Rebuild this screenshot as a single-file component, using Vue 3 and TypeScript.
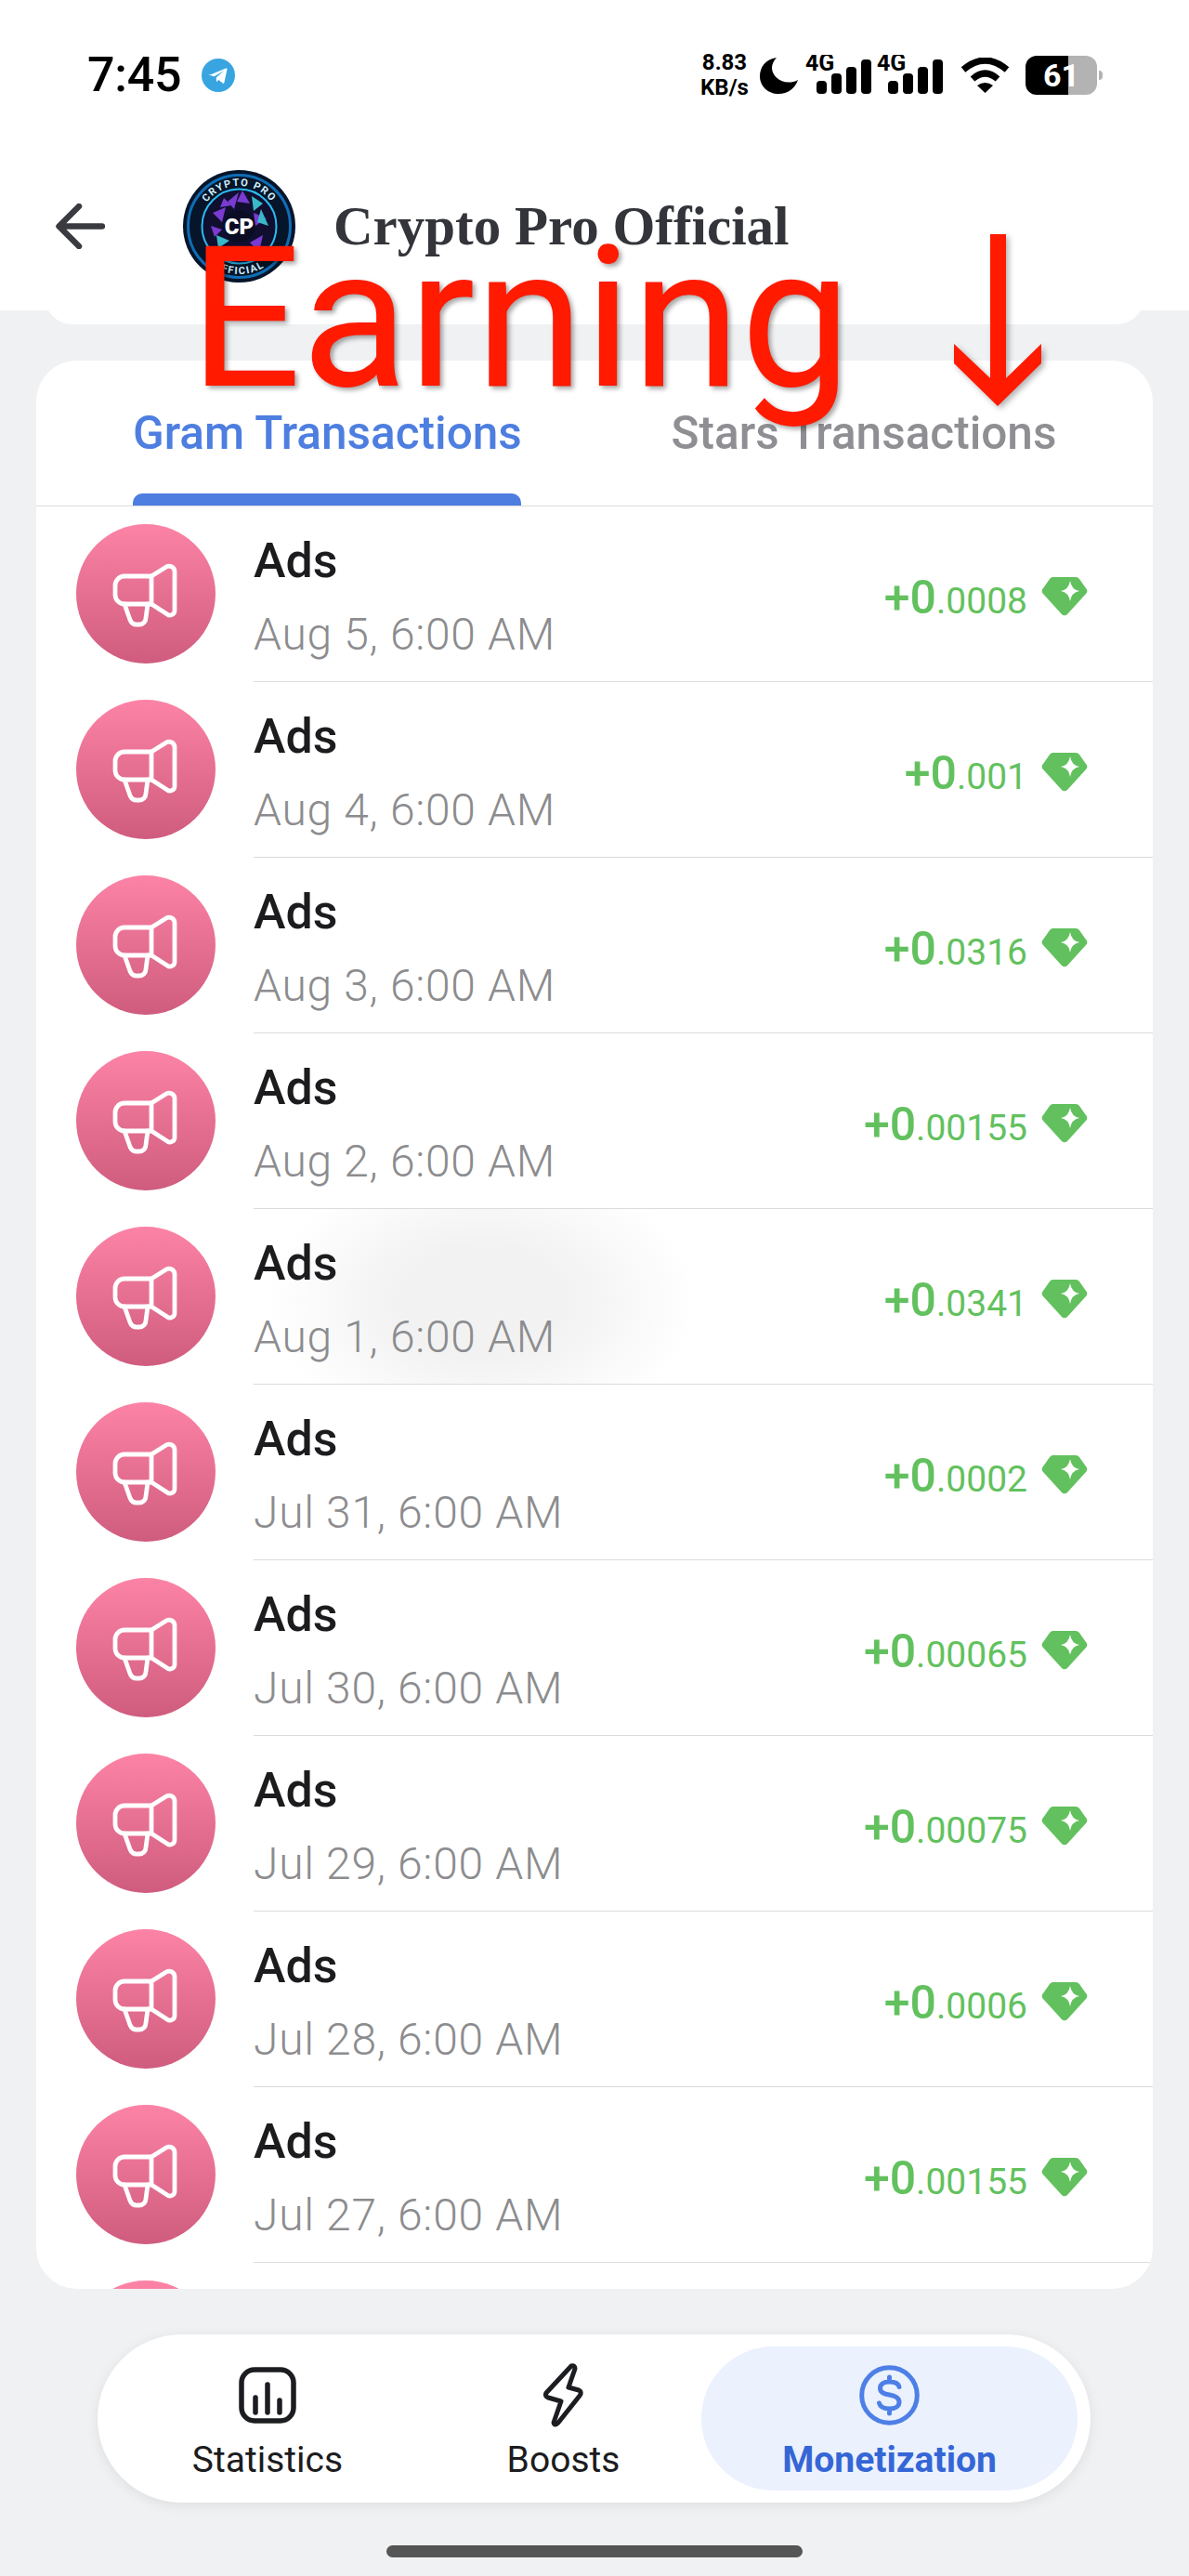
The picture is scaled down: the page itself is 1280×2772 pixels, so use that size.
<script setup lang="ts">
interface Tx {
  date: string;
  frac: string;
}

const txs: Tx[] = [
  { date: 'Aug 5, 6:00 AM', frac: '.0008' },
  { date: 'Aug 4, 6:00 AM', frac: '.001' },
  { date: 'Aug 3, 6:00 AM', frac: '.0316' },
  { date: 'Aug 2, 6:00 AM', frac: '.00155' },
  { date: 'Aug 1, 6:00 AM', frac: '.0341' },
  { date: 'Jul 31, 6:00 AM', frac: '.0002' },
  { date: 'Jul 30, 6:00 AM', frac: '.00065' },
  { date: 'Jul 29, 6:00 AM', frac: '.00075' },
  { date: 'Jul 28, 6:00 AM', frac: '.0006' },
  { date: 'Jul 27, 6:00 AM', frac: '.00155' },
  { date: 'Jul 26, 6:00 AM', frac: '.0004' },
];

// purple and teal bits inside the channel logo
const shards = [
  '60,24 48,34 55,42',
  '74,28 86,36 76,44',
  '32,46 46,40 42,56',
  '90,52 76,46 78,60',
  '36,70 50,76 38,84',
  '86,70 72,78 82,88',
  '50,90 62,82 66,94',
  '74,92 66,98 60,90',
  '64,22 72,36 58,34',
  '44,30 52,38 40,40',
  '84,42 92,60 80,56',
  '30,60 42,64 34,72',
];
</script>

<template>
  <div class="phone">
    <div class="top">
      <div class="status">
        <div class="status-left">
          <span class="time">7:45</span>
          <svg class="tg" viewBox="0 0 24 24">
            <circle cx="12" cy="12" r="12" fill="#38a5e1" />
            <path d="M5 12.2 17.4 7c.6-.2 1.1.1.9.9l-2 9.2c-.2.7-.6.8-1.1.5l-3-2.2-1.5 1.4-.2-3.1 5.6-5-7 4.2-3-.9c-.7-.2-.7-.6-.1-.8Z" fill="#fff" />
          </svg>
        </div>
        <div class="status-right">
          <div class="net">8.83<br />KB/s</div>
          <svg class="moon" viewBox="0 0 41 40">
            <path d="M18 1C6 3 0 11 0 21c0 11 9 19 20 19 10 0 18-6 21-15-3 2-7 2.500-10 2.500-10 0-18-7.500-18-15.500 0-4 2-8 5-11Z" />
          </svg>
          <svg v-for="n in 2" :key="n" class="signal" viewBox="0 0 71 44">
            <text x="0" y="17" class="sig-text">4G</text>
            <rect x="12" y="28" width="11" height="14" rx="4" />
            <rect x="28" y="20" width="11" height="22" rx="4" />
            <rect x="44" y="13" width="11" height="29" rx="4" />
            <rect x="60" y="5" width="11" height="37" rx="4" />
          </svg>
          <svg class="wifi" viewBox="0 0 53 38">
            <path d="M3 13Q26.500-7 50 13" fill="none" stroke="#000" stroke-width="7" />
            <path d="M13 23Q26.500 11 40 23" fill="none" stroke="#000" stroke-width="7" />
            <path d="M26.500 38 18 30Q26.500 24 35 30Z" />
          </svg>
          <div class="battery"><span>61</span></div>
        </div>
      </div>
      <div class="head">
        <svg class="back" viewBox="0 0 53 49">
          <path d="M50 24.500H4M25 3 3.500 24.500 25 46" fill="none" stroke="#3a3b40" stroke-width="6.500" stroke-linecap="round" stroke-linejoin="round" />
        </svg>
        <svg class="logo" viewBox="0 0 121 121">
          <defs>
            <path id="arc-top" d="M17 60.500a43.500 43.500 0 0 1 87 0" />
            <path id="arc-bottom" d="M9 60.500a51.500 51.500 0 0 0 103 0" />
          </defs>
          <circle cx="60.500" cy="60.500" r="60.500" fill="#06152a" />
          <circle cx="60.500" cy="60.500" r="55" fill="none" stroke="#0f6db5" stroke-width="3" />
          <circle cx="60.500" cy="60.500" r="40" fill="#100f30" stroke="#2bbcf2" stroke-width="2" />
          <polygon v-for="(p, i) in shards" :key="i" :points="p" :fill="i % 3 === 1 ? '#39b8c8' : '#7a3bd0'" />
          <circle cx="60.500" cy="60.500" r="17" fill="#0a0d24" />
          <text class="logo-cp" x="60.500" y="69" text-anchor="middle">CP</text>
          <text class="logo-arc"><textPath href="#arc-top" startOffset="50%" text-anchor="middle">CRYPTO PRO</textPath></text>
          <text class="logo-arc"><textPath href="#arc-bottom" startOffset="50%" text-anchor="middle">OFFICIAL</textPath></text>
        </svg>
        <div class="title">Crypto Pro Official</div>
      </div>
    </div>
    <div class="top-lip"></div>

    <div class="card">
      <div class="tabs">
        <div class="tab active">Gram Transactions</div>
        <div class="tab">Stars Transactions</div>
      </div>
      <div v-for="(tx, i) in txs" :key="i" :class="['row', { smudged: i === 4 }]">
        <div class="avatar">
          <svg viewBox="0 0 150 150">
            <g fill="none" stroke="#fff" stroke-width="4.800" stroke-linejoin="round" stroke-linecap="round">
              <path d="M81 56H52a10 10 0 0 0-10 10v10a10 10 0 0 0 10 10h29Z" />
              <path d="M81 56 97 46a6 6 0 0 1 9 5v42a5 5 0 0 1-8 4L81 86" />
              <path d="M52 86 58 103a8 8 0 0 0 8 5h2a7 7 0 0 0 7-7l2-15" />
            </g>
          </svg>
        </div>
        <div class="body">
          <div class="info">
            <div class="name">Ads</div>
            <div class="date">{{ tx.date }}</div>
          </div>
          <div class="amount"><b>+0</b>{{ tx.frac }}</div>
          <svg class="gem" viewBox="0 0 50 43">
            <path d="M12 1H37a5 5 0 0 1 4 2L48 13a4 4 0 0 1 0 6L28 41a4 4 0 0 1-6 0L2 19a4 4 0 0 1 0-6L9 3a5 5 0 0 1 3-2Z" fill="#62c15e" />
            <path d="M31 5Q32.500 14.500 41 16 32.500 17.500 31 27 29.500 17.500 21 16 29.500 14.500 31 5Z" fill="#fff" />
          </svg>
        </div>
      </div>
    </div>

    <nav class="nav">
      <div class="item">
        <div class="icon">
          <svg class="i-stats" viewBox="0 0 62 61">
            <rect x="3" y="3" width="56" height="55" rx="14" fill="none" stroke="#1c1d21" stroke-width="5.500" />
            <path d="M18 33V49M31 19V49M44 36V49" stroke="#1c1d21" stroke-width="5.500" stroke-linecap="round" />
          </svg>
        </div>
        <span class="label">Statistics</span>
      </div>
      <div class="item">
        <div class="icon">
          <svg class="i-bolt" viewBox="0 0 45 70">
            <path d="M31 4Q35 3 35 7L28 27 39 30Q43 32 40 36L17 65Q13 69 12 65L20 42 6 38Q2 36 4 33Z" fill="none" stroke="#1c1d21" stroke-width="5" stroke-linejoin="round" />
          </svg>
        </div>
        <span class="label">Boosts</span>
      </div>
      <div class="item on">
        <div class="icon">
          <svg class="i-coin" viewBox="0 0 65 65">
            <circle cx="32.500" cy="32.500" r="29.800" fill="none" stroke="#4d7fe6" stroke-width="5" />
            <path d="M43 23.500C42 19.500 38 18 32.500 18 26.500 18 22.500 20.500 22.500 25 22.500 35 43 29 43 40 43 44.500 38.500 47 32.500 47 26.500 47 22.500 45 21.500 41M32.500 13V18M32.500 47V52" fill="none" stroke="#4d7fe6" stroke-width="5" stroke-linecap="round" />
          </svg>
        </div>
        <span class="label">Monetization</span>
      </div>
    </nav>
    <div class="home-bar"></div>

    <div class="earning">Earning</div>
    <svg class="arrow" viewBox="0 0 94 185">
      <path d="M39 0H56V155L94 118V139L47 185 0 139V118L39 155Z" fill="#ff1a00" />
    </svg>
  </div>
</template>

<style>
html,
body {
  margin: 0;
  background: #f0f1f3;
}
</style>

<style scoped>
.phone {
  position: relative;
  width: 1280px;
  height: 2772px;
  overflow: hidden;
  background: #f0f1f3;
  font-family: Roboto, "Liberation Sans", sans-serif;
}

.top {
  height: 334px;
  background: #fff;
}

.top-lip {
  height: 30px;
  margin: -15px 48px 0;
  background: #fff;
  border-radius: 0 0 30px 30px;
}

.status {
  height: 162px;
  padding: 0 93px 0 94px;
  box-sizing: border-box;
  display: flex;
  align-items: center;
  justify-content: space-between;
}

.status-left {
  display: flex;
  align-items: center;
  gap: 22px;
}

.time {
  font-size: 52px;
  font-weight: 500;
  letter-spacing: -0.3px;
  line-height: 60px;
  color: #000;
}

.tg {
  width: 36px;
  height: 36px;
}

.status-right {
  display: flex;
  align-items: center;
}

.net {
  width: 52px;
  font-size: 24px;
  font-weight: 700;
  line-height: 27px;
  color: #000;
  text-align: center;
}

.moon {
  width: 41px;
  height: 40px;
  margin: 0 8px 0 12px;
}

.signal {
  width: 71px;
  height: 44px;
  margin-right: 6px;
}

.sig-text {
  font-size: 25px;
  font-weight: 700;
}

.wifi {
  width: 53px;
  height: 38px;
  margin: 0 17px 0 13px;
}

.battery {
  position: relative;
  width: 77px;
  height: 42px;
  margin-right: 6px;
  border-radius: 12px;
  background: linear-gradient(to right, #000 46px, #b3b3b3 46px);
  color: #fff;
  font-size: 34px;
  font-weight: 700;
  line-height: 42px;
}

.battery span {
  margin-left: 19px;
}

.battery::after {
  content: "";
  position: absolute;
  right: -6px;
  top: 16px;
  width: 4px;
  height: 10px;
  border-radius: 0 5px 5px 0;
  background: #b3b3b3;
}

.head {
  height: 162px;
  padding-left: 60px;
  display: flex;
  align-items: center;
}

.back {
  width: 53px;
  height: 49px;
  margin-right: 84px;
}

.logo {
  width: 121px;
  height: 121px;
  margin-right: 41px;
}

.logo-cp {
  font-size: 24px;
  font-weight: 900;
  fill: #fff;
}

.logo-arc {
  font-size: 11px;
  font-weight: 700;
  letter-spacing: 1.5px;
  fill: #cfeefb;
}

.title {
  font-family: "Liberation Serif", serif;
  font-size: 59px;
  font-weight: 700;
  color: #33353a;
}

.card {
  height: 2075px;
  margin: 39px 39px 0;
  background: #fff;
  border-radius: 44px;
  overflow: hidden;
}

.tabs {
  height: 156px;
  padding-left: 104px;
  display: flex;
  gap: 160px;
  border-bottom: 1px solid #dcdcde;
}

.tab {
  width: 418px;
  padding-top: 50px;
  box-sizing: border-box;
  text-align: center;
  font-size: 49.500px;
  font-weight: 500;
  line-height: 56px;
  color: #8e8e93;
  white-space: nowrap;
  position: relative;
}

.tab.active {
  color: #4d7ee0;
}

.tab.active::after {
  content: "";
  position: absolute;
  left: 0;
  right: 0;
  bottom: 0;
  height: 13px;
  background: #4d7ee0;
  border-radius: 10px 10px 0 0;
}

.row {
  height: 189px;
  display: flex;
  align-items: flex-start;
  padding-left: 43px;
  box-sizing: border-box;
}

.smudged {
  background: radial-gradient(230px 150px at 480px 99px, #f2f2f2 40%, rgba(242, 242, 242, 0) 100%);
}

.avatar {
  flex: none;
  width: 150px;
  height: 150px;
  margin-top: 19px;
  border-radius: 50%;
  background: linear-gradient(#fc83a5, #cf5c7e);
}

.avatar svg {
  display: block;
  width: 150px;
  height: 150px;
}

.body {
  flex: 1;
  height: 189px;
  margin-left: 41px;
  box-sizing: border-box;
  display: flex;
  align-items: flex-start;
  border-bottom: 1px solid #dcdcde;
}

.info {
  flex: 1;
  padding-top: 29px;
}

.name {
  font-size: 52px;
  font-weight: 500;
  line-height: 59px;
  color: #1c1c1e;
}

.date {
  margin-top: 23px;
  font-size: 48px;
  font-weight: 300;
  letter-spacing: 0.7px;
  line-height: 54px;
  color: #8c8c8e;
}

.amount {
  margin-top: 70px;
  font-size: 39px;
  line-height: 56px;
  color: #62c15e;
  white-space: nowrap;
}

.amount b {
  font-size: 50px;
  font-weight: 500;
}

.gem {
  width: 50px;
  height: 43px;
  margin: 75px 70px 0 15px;
}

.nav {
  width: 1069px;
  height: 181px;
  margin: 49px 0 0 105px;
  padding: 13px;
  box-sizing: border-box;
  display: grid;
  grid-template-columns: 340px 297px 405px;
  background: #fff;
  border-radius: 91px;
  box-shadow: 0 3px 14px rgba(0, 0, 0, 0.08);
}

.item {
  padding-top: 19px;
  display: flex;
  flex-direction: column;
  align-items: center;
  border-radius: 78px;
}

.item.on {
  background: #ebf1fd;
}

.icon {
  height: 66px;
  display: flex;
  align-items: center;
  justify-content: center;
}

.i-stats {
  width: 62px;
  height: 61px;
}

.i-bolt {
  width: 45px;
  height: 70px;
}

.i-coin {
  width: 65px;
  height: 65px;
}

.label {
  margin-top: 15px;
  font-size: 39px;
  line-height: 44px;
  color: #1c1c1e;
}

.on .label {
  font-weight: 700;
  color: #3566d6;
}

.home-bar {
  width: 448px;
  height: 13px;
  margin: 46px 0 0 416px;
  border-radius: 7px;
  background: #555;
}

.earning {
  position: absolute;
  left: 204px;
  top: 218px;
  font-size: 212px;
  line-height: 250px;
  color: #ff1a00;
  text-shadow: 3px 3px 5px rgba(0, 0, 0, 0.35);
  white-space: nowrap;
}

.arrow {
  position: absolute;
  left: 1027px;
  top: 252px;
  width: 94px;
  height: 185px;
  filter: drop-shadow(3px 3px 3px rgba(0, 0, 0, 0.3));
}
</style>
